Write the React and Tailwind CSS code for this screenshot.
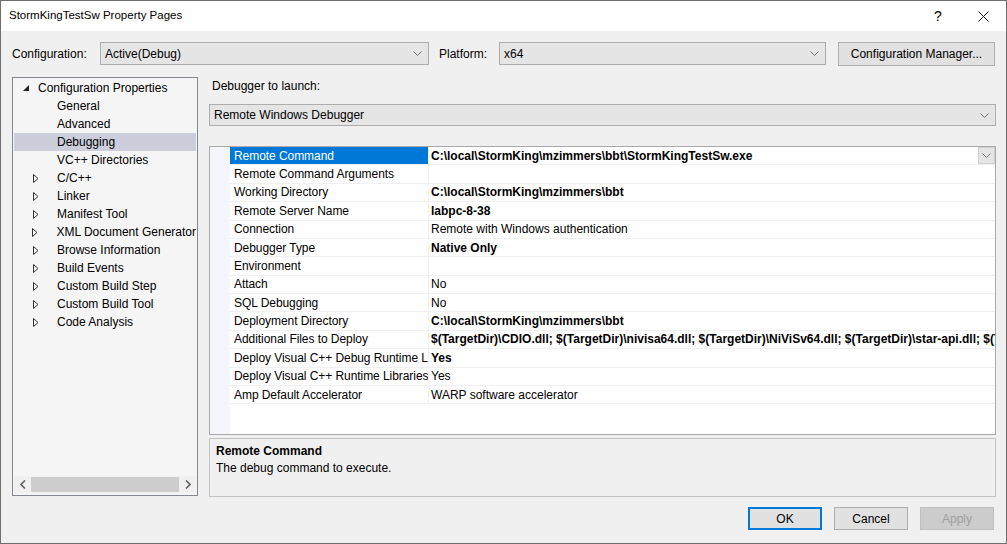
import React from 'react'

const tree = [
  { label: 'General' },
  { label: 'Advanced' },
  { label: 'Debugging', selected: true },
  { label: 'VC++ Directories' },
  { label: 'C/C++', group: true },
  { label: 'Linker', group: true },
  { label: 'Manifest Tool', group: true },
  { label: 'XML Document Generator', group: true },
  { label: 'Browse Information', group: true },
  { label: 'Build Events', group: true },
  { label: 'Custom Build Step', group: true },
  { label: 'Custom Build Tool', group: true },
  { label: 'Code Analysis', group: true },
]

const props = [
  ['Remote Command', 'C:\\local\\StormKing\\mzimmers\\bbt\\StormKingTestSw.exe', true],
  ['Remote Command Arguments', '', false],
  ['Working Directory', 'C:\\local\\StormKing\\mzimmers\\bbt', true],
  ['Remote Server Name', 'labpc-8-38', true],
  ['Connection', 'Remote with Windows authentication', false],
  ['Debugger Type', 'Native Only', true],
  ['Environment', '', false],
  ['Attach', 'No', false],
  ['SQL Debugging', 'No', false],
  ['Deployment Directory', 'C:\\local\\StormKing\\mzimmers\\bbt', true],
  ['Additional Files to Deploy', '$(TargetDir)\\CDIO.dll; $(TargetDir)\\nivisa64.dll; $(TargetDir)\\NiViSv64.dll; $(TargetDir)\\star-api.dll; $(TargetDir)\\boost.dll', true],
  ['Deploy Visual C++ Debug Runtime Libraries', 'Yes', true],
  ['Deploy Visual C++ Runtime Libraries', 'Yes', false],
  ['Amp Default Accelerator', 'WARP software accelerator', false],
]

function Chevron() {
  return (
    <svg width="9" height="5" viewBox="0 0 9 5">
      <path d="M0.5 0.5 L4.5 4.5 L8.5 0.5" fill="none" stroke="#707070" strokeWidth="1" />
    </svg>
  )
}

function Combo({ value, className }) {
  return (
    <div className={`flex items-center justify-between bg-[#e5e5e5] border border-[#adadad] ${className}`}>
      <span className="pl-[4px] whitespace-nowrap">{value}</span>
      <span className="pr-[6px] flex items-center"><Chevron /></span>
    </div>
  )
}

function Button({ children, primary, disabled }) {
  let cls = 'border border-[#adadad] bg-[#e1e1e1] text-black'
  if (primary) cls = 'border-2 border-[#0078d7] bg-[#e1e1e1] text-black'
  if (disabled) cls = 'border border-[#bfbfbf] bg-[#cccccc] text-[#a0a0a0]'
  return (
    <div className={`w-[74px] h-[23px] flex items-center justify-center ${cls}`}>{children}</div>
  )
}

export default function App() {
  return (
    <div
      className="w-[1007px] h-[544px] border border-[#6f6f6f] bg-[#f0f0f0] text-[12px] text-black flex flex-col overflow-hidden"
      style={{ fontFamily: '"Liberation Sans", Arial, sans-serif' }}
    >
      {/* title bar */}
      <div className="h-[30px] bg-white flex items-center justify-between shrink-0">
        <span className="pl-[8px] text-[11.5px]">StormKingTestSw Property Pages</span>
        <div className="flex items-center h-full">
          <span className="w-[46px] text-center text-[14px] pl-[2px]">?</span>
          <span className="w-[46px] flex justify-center">
            <svg width="11" height="11" viewBox="0 0 11 11">
              <path d="M0.5 0.5 L10.5 10.5 M10.5 0.5 L0.5 10.5" stroke="#111" strokeWidth="1" />
            </svg>
          </span>
        </div>
      </div>

      {/* configuration row */}
      <div className="flex items-center mt-[11px] pl-[11px] h-[23px] shrink-0">
        <span className="w-[88px]">Configuration:</span>
        <Combo value="Active(Debug)" className="w-[329px] h-[23px]" />
        <span className="ml-[10px] w-[60px]">Platform:</span>
        <Combo value="x64" className="w-[327px] h-[23px]" />
        <div className="ml-[12px] w-[157px] h-[24px] border border-[#adadad] bg-[#e1e1e1] flex items-center justify-center">
          Configuration Manager...
        </div>
      </div>

      {/* main */}
      <div className="flex mt-[12px] pl-[11px] shrink-0">
        {/* tree */}
        <div className="w-[186px] h-[419px] border border-[#828790] bg-[#f5f5f5] flex flex-col">
          <div className="flex-1 pt-[1px]">
            <div className="h-[18px] flex items-center">
              <svg width="7" height="7" viewBox="0 0 7 7" className="ml-[10px]">
                <path d="M6 0 L6 6 L0 6 Z" fill="#222" />
              </svg>
              <span className="ml-[8px] whitespace-nowrap">Configuration Properties</span>
            </div>
            {tree.map((t) => (
              <div
                key={t.label}
                className={`h-[18px] flex items-center mr-[1px] ml-[1px] ${t.selected ? 'bg-[#cccedb]' : ''}`}
              >
                <span className="w-[30px] flex justify-end pr-[5px]">
                  {t.group && (
                    <svg width="6" height="9" viewBox="0 0 6 9">
                      <path d="M0.5 0.5 L5 4.5 L0.5 8.5 Z" fill="none" stroke="#333" strokeWidth="1" />
                    </svg>
                  )}
                </span>
                <span className="ml-[13px] whitespace-nowrap">{t.label}</span>
              </div>
            ))}
          </div>
          <div className="h-[17px] mx-[1px] mb-[2px] flex items-center bg-[#f0f0f0]">
            <span className="w-[17px] flex justify-center">
              <svg width="6" height="9" viewBox="0 0 6 9">
                <path d="M5 0.5 L1 4.5 L5 8.5" fill="none" stroke="#606060" strokeWidth="1.6" />
              </svg>
            </span>
            <div className="flex-1 h-[15px] bg-[#cdcdcd]" />
            <span className="w-[17px] flex justify-center">
              <svg width="6" height="9" viewBox="0 0 6 9">
                <path d="M1 0.5 L5 4.5 L1 8.5" fill="none" stroke="#606060" strokeWidth="1.6" />
              </svg>
            </span>
          </div>
        </div>

        {/* right */}
        <div className="ml-[11px] w-[787px] flex flex-col">
          <div className="h-[18px] flex items-center pl-[3px]">Debugger to launch:</div>
          <Combo value="Remote Windows Debugger" className="mt-[9px] h-[22px] w-full" />

          {/* property grid */}
          <div className="mt-[20px] h-[289px] border border-[#a9a9a9] bg-white flex">
            <div className="w-[20px] bg-[#f4f6fb]" />
            <div className="flex-1 flex flex-col min-w-0">
              {props.map(([name, value, bold], i) => (
                <div key={name} className="h-[18.38px] flex border-b border-[#f0f0f0]">
                  <div
                    className={`w-[199px] shrink-0 pl-[4px] flex items-center overflow-hidden whitespace-nowrap tracking-[-0.06px] border-r border-[#f0f0f0] ${
                      i === 0 ? 'bg-[#0078d7] text-white' : ''
                    }`}
                  >
                    {name}
                  </div>
                  <div className="flex-1 min-w-0 flex items-center overflow-hidden">
                    <span className={`pl-[2px] whitespace-nowrap flex-1 overflow-hidden ${bold ? 'font-bold' : ''}`}>
                      {value}
                    </span>
                    {i === 0 && (
                      <span className="w-[17px] h-full shrink-0 bg-[#e5e5e5] border border-[#cfcfcf] flex items-center justify-center">
                        <Chevron />
                      </span>
                    )}
                  </div>
                </div>
              ))}
            </div>
          </div>

          {/* description */}
          <div className="mt-[3px] h-[59px] border border-[#c3c3c3] bg-[#f0f0f0] pl-[6px] pt-[3px]">
            <div className="font-bold leading-[18px]">Remote Command</div>
            <div className="leading-[16px]">The debug command to execute.</div>
          </div>
        </div>
      </div>

      {/* buttons */}
      <div className="flex justify-end gap-[12px] mt-[10px] pr-[12px]">
        <Button primary>OK</Button>
        <Button>Cancel</Button>
        <Button disabled>Apply</Button>
      </div>
    </div>
  )
}
